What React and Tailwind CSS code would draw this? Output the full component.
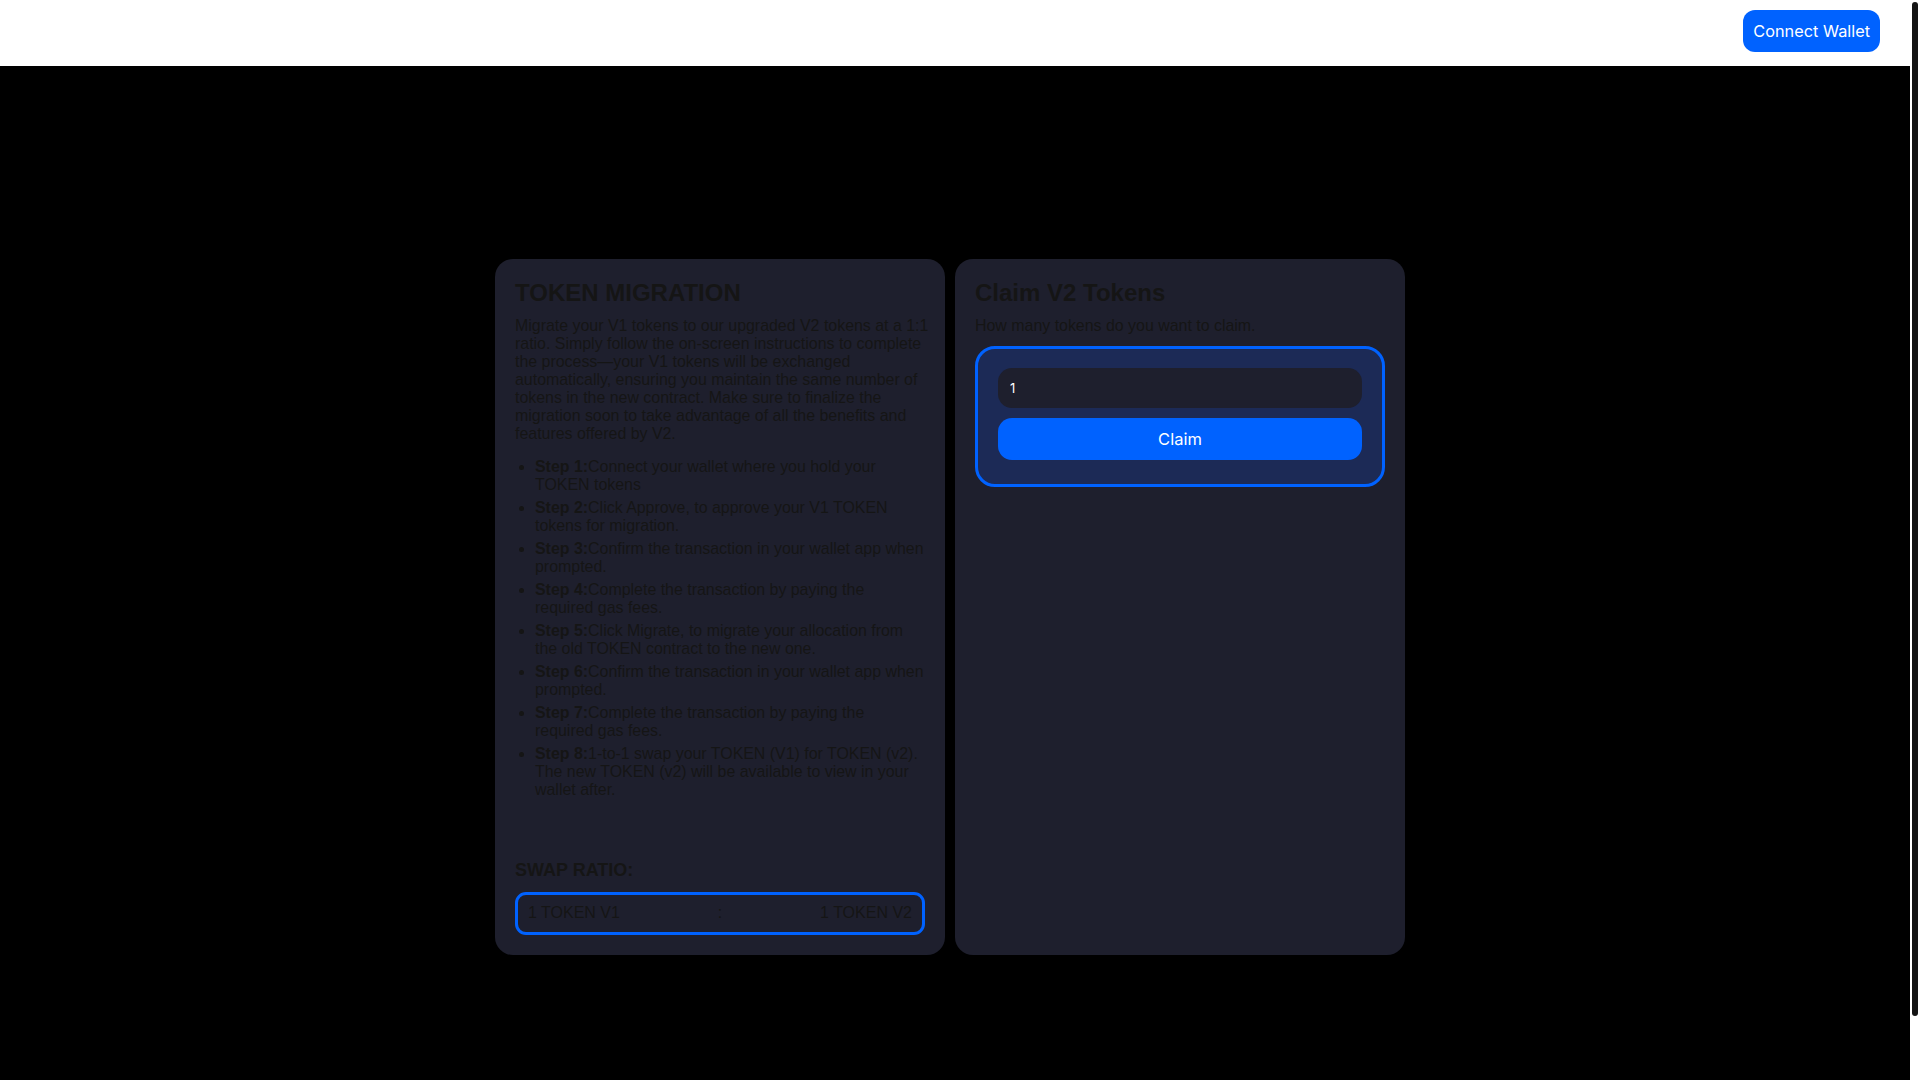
import React from "react";

const steps = [
  ["Step 1:", "Connect your wallet where you hold your TOKEN tokens"],
  ["Step 2:", "Click Approve, to approve your V1 TOKEN tokens for migration."],
  ["Step 3:", "Confirm the transaction in your wallet app when prompted."],
  ["Step 4:", "Complete the transaction by paying the required gas fees."],
  ["Step 5:", "Click Migrate, to migrate your allocation from the old TOKEN contract to the new one."],
  ["Step 6:", "Confirm the transaction in your wallet app when prompted."],
  ["Step 7:", "Complete the transaction by paying the required gas fees."],
  ["Step 8:", "1-to-1 swap your TOKEN (V1) for TOKEN (v2). The new TOKEN (v2) will be available to view in your wallet after."],
];

export default function App() {
  return (
    <div className="h-screen w-full flex bg-white">
      <div className="flex-1 min-w-0 h-full overflow-y-auto [scrollbar-width:none]">
        <header className="h-[66px] bg-white flex justify-end items-start pt-[10px] pr-[30px]">
          <button className="h-[42px] px-[10px] rounded-[12px] bg-[#0062ff] text-white text-[16.3px] font-normal font-['Inter',sans-serif]">
            Connect Wallet
          </button>
        </header>
        <main className="min-h-screen bg-black flex items-center justify-center pt-[2px] pr-[10px] font-['Liberation_Sans',Arial,sans-serif] text-[#151515]">
          <div className="flex gap-[10px] items-stretch">
            <section className="w-[450px] rounded-[18px] bg-[#1e1f2d] p-5 flex flex-col">
              <h2 className="text-[24px] leading-[27.6px] font-bold mb-[10px]">TOKEN MIGRATION</h2>
              <p className="text-[15.93px] leading-[18px] mb-[15.5px] -mr-[4px]">
                Migrate your V1 tokens to our upgraded V2 tokens at a 1:1 ratio. Simply follow the on-screen instructions to complete the process—your V1 tokens will be exchanged automatically, ensuring you maintain the same number of tokens in the new contract. Make sure to finalize the migration soon to take advantage of all the benefits and features offered by V2.
              </p>
              <ul className="list-disc pl-5 text-[15.93px] leading-[18px]">
                {steps.map(([s, t]) => (
                  <li key={s} className="mb-[5px] last:mb-0">
                    <strong className="font-bold">{s}</strong>
                    {t}
                  </li>
                ))}
              </ul>
              <h3 className="mt-[61px] text-[18px] leading-[20.7px] font-bold">SWAP RATIO:</h3>
              <div className="mt-[11px] h-[43px] border-[3px] border-[#0062ff] rounded-[11px] px-[10px] flex items-center justify-between text-[16px]">
                <span>1 TOKEN V1</span>
                <span>:</span>
                <span>1 TOKEN V2</span>
              </div>
            </section>
            <section className="w-[450px] rounded-[18px] bg-[#1e1f2d] p-5 flex flex-col">
              <h2 className="text-[24px] leading-[27.6px] font-bold mb-[10px]">Claim V2 Tokens</h2>
              <p className="text-[15.93px] leading-[18px]">How many tokens do you want to claim.</p>
              <div className="mt-[11.5px] border-[3px] border-[#0062ff] rounded-[20px] bg-[#1c2a56] pt-[19px] px-[20px] pb-[24px] flex flex-col gap-[10px]">
                <input
                  defaultValue="1"
                  className="h-[40px] w-full rounded-[14px] bg-[#1e1f2d] px-3 text-[13px] text-white outline-none font-['Inter',sans-serif]"
                />
                <button className="h-[42px] w-full rounded-[14px] bg-[#0062ff] text-white text-[16.5px] font-normal font-['Inter',sans-serif]">
                  Claim
                </button>
              </div>
            </section>
          </div>
        </main>
      </div>
      <div className="w-[10px] h-full bg-white flex flex-col pt-[2px] pb-[64px] px-[2px]">
        <div className="flex-1 rounded-full bg-[#141414]" />
      </div>
    </div>
  );
}
